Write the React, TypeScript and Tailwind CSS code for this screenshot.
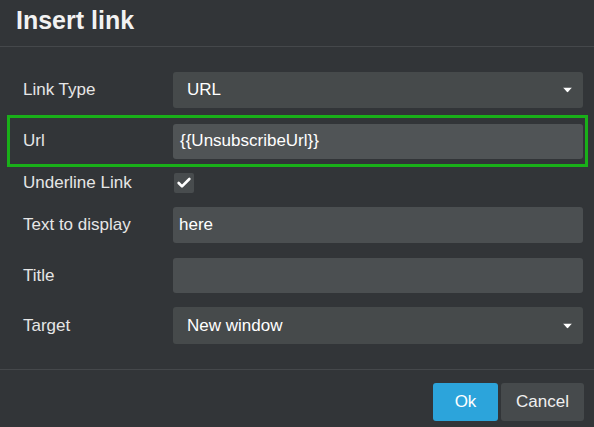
import { Check } from "lucide-react";

const font = { fontFamily: '"Liberation Sans", Arial, sans-serif' };

function Caret() {
  return (
    <svg width="9" height="5" viewBox="0 0 9 5" className="absolute right-[11px] top-1/2 -translate-y-1/2">
      <path d="M0 0 L9 0 L4.5 5 Z" fill="#ffffff" />
    </svg>
  );
}

function Row({
  label,
  h,
  focus,
  children,
}: {
  label: string;
  h: string;
  focus?: boolean;
  children: React.ReactNode;
}) {
  return (
    <div
      className={`ml-[7px] w-[581px] flex items-center border-[3px] ${h} ${
        focus ? "border-[#19b019]" : "border-transparent"
      }`}
    >
      <div className="pl-[13px] w-[163px] text-[17px] text-[#e6e6e6]">{label}</div>
      {children}
    </div>
  );
}

export default function App() {
  return (
    <div className="w-[594px] h-[427px] bg-[#323538] flex flex-col overflow-hidden" style={font}>
      <div className="h-[47px] border-b border-[#45484b] flex items-center pl-4">
        <h1 className="text-[25px] font-bold text-[#f2f2f2] -mt-1">Insert link</h1>
      </div>

      <div className="pt-[18px] pb-[18px] border-b border-[#45484b]">
        <Row label="Link Type" h="h-[50px]">
          <div className="relative w-[410px] h-[36px] bg-[#464a4b] rounded-[3px] flex items-center pl-[14px] text-[17px] text-white">
            URL
            <Caret />
          </div>
        </Row>
        <Row label="Url" h="h-[52px]" focus>
          <div className="w-[410px] h-[35px] bg-[#505456] rounded-[3px] flex items-center pl-[7px] text-[17px] text-white">
            {"{{UnsubscribeUrl}}"}
          </div>
        </Row>
        <Row label="Underline Link" h="h-[32px]">
          <div className="ml-[1px] w-[20px] h-[20px] bg-[#484c4e] rounded-[2px] flex items-center justify-center">
            <Check size={16} strokeWidth={4} color="#ffffff" />
          </div>
        </Row>
        <Row label="Text to display" h="h-[52px]">
          <div className="w-[410px] h-[36px] bg-[#4b4f51] rounded-[3px] flex items-center pl-[6px] text-[17px] text-white">
            here
          </div>
        </Row>
        <Row label="Title" h="h-[49px]">
          <div className="w-[410px] h-[35px] bg-[#4b4f51] rounded-[3px]" />
        </Row>
        <Row label="Target" h="h-[51px]">
          <div className="relative w-[410px] h-[37px] bg-[#464a4b] rounded-[3px] flex items-center pl-[14px] text-[17px] text-white">
            New window
            <Caret />
          </div>
        </Row>
      </div>

      <div className="flex justify-end gap-[3px] pt-[13px] pr-[10px]">
        <button className="w-[65px] h-[38px] bg-[#2ca4db] rounded-[3px] text-[17px] text-white">Ok</button>
        <button className="w-[83px] h-[38px] bg-[#464a4c] rounded-[3px] text-[17px] text-[#f0f0f0]">Cancel</button>
      </div>
    </div>
  );
}
